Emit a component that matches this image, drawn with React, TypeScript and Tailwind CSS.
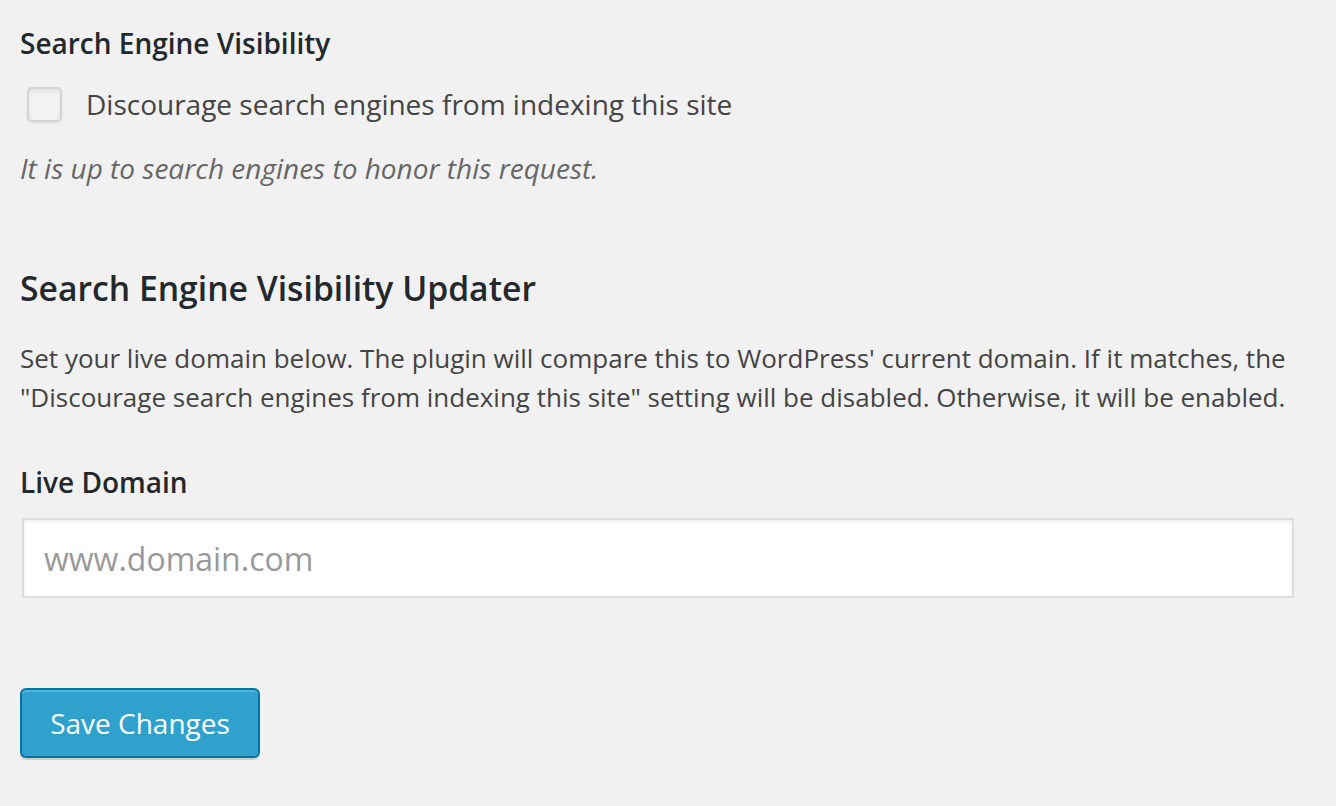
import React from "react";

export default function App() {
  return (
    <div
      className="min-h-[806px] w-[1336px] bg-[#f1f1f1] pl-[20px] pt-[23px]"
      style={{ fontFamily: '"Open Sans", "Noto Sans", sans-serif' }}
    >
      <div className="text-[28px] font-semibold leading-[40px] text-[#23282d]">
        Search Engine Visibility
      </div>
      <label className="mt-[21px] flex h-[40px] items-center">
        <span className="ml-[7px] block h-[35px] w-[35px] rounded-[5px] border-2 border-[#d4d4d4] bg-[#f3f3f3] shadow-[inset_0_2px_4px_rgba(0,0,0,0.08),0_1px_2px_rgba(0,0,0,0.08)]" />
        <span className="ml-[24px] text-[28px] leading-[40px] text-[#444]">
          Discourage search engines from indexing this site
        </span>
      </label>
      <div className="mt-[24px] text-[28px] italic leading-[40px] text-[#666]">
        It is up to search engines to honor this request.
      </div>
      <h2 className="mt-[78px] text-[33.7px] font-semibold leading-[44px] text-[#23282d]">
        Search Engine Visibility Updater
      </h2>
      <p className="mt-[29px] w-[1290px] text-[26px] leading-[39px] text-[#444]">
        Set your live domain below. The plugin will compare this to WordPress' current domain. If it matches, the "Discourage search engines from indexing this site" setting will be disabled. Otherwise, it will be enabled.
      </p>
      <div className="mt-[45px] text-[28px] font-semibold leading-[40px] text-[#23282d]">
        Live Domain
      </div>
      <input
        type="text"
        placeholder="www.domain.com"
        className="ml-[2px] mt-[16px] block h-[80px] w-[1272px] border-2 border-[#dddddd] bg-white px-[20px] text-[32px] text-[#333] shadow-[inset_0_2px_4px_rgba(0,0,0,0.07)] outline-none placeholder:text-[#999]"
        style={{ fontFamily: '"Open Sans", "Noto Sans", sans-serif' }}
      />
      <button
        className="mt-[90px] flex h-[70px] w-[240px] items-center justify-center rounded-[6px] border-2 border-[#0074a2] bg-[#2ea2cc] text-[28px] text-white shadow-[inset_0_2px_0_rgba(120,200,230,0.5),0_2px_0_rgba(0,0,0,0.15)]"
        style={{ fontFamily: '"Open Sans", "Noto Sans", sans-serif' }}
      >
        Save Changes
      </button>
    </div>
  );
}
